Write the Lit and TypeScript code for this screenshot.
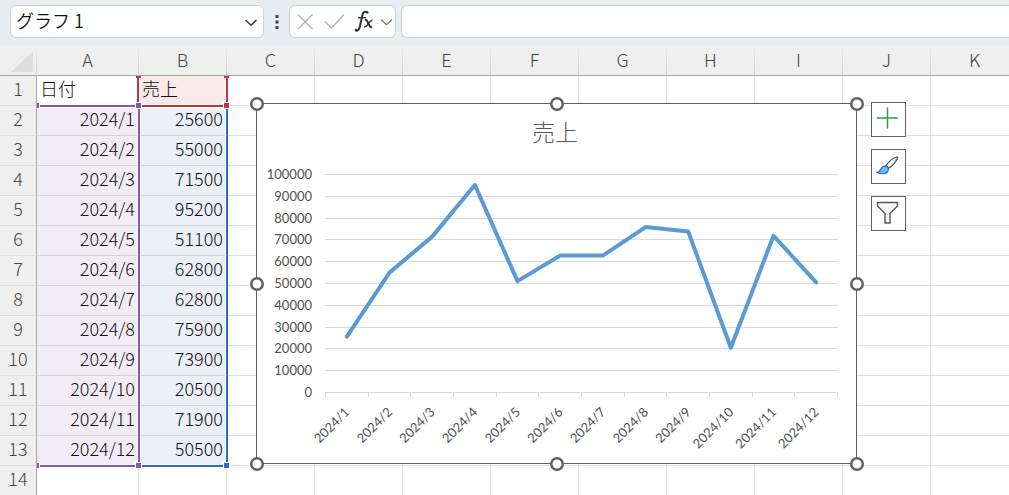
import { LitElement, html, svg, css } from "lit";
import { customElement } from "lit/decorators.js";

interface Sale {
  month: string;
  amount: number;
}

const SALES: Sale[] = [
  { month: "2024/1", amount: 25600 },
  { month: "2024/2", amount: 55000 },
  { month: "2024/3", amount: 71500 },
  { month: "2024/4", amount: 95200 },
  { month: "2024/5", amount: 51100 },
  { month: "2024/6", amount: 62800 },
  { month: "2024/7", amount: 62800 },
  { month: "2024/8", amount: 75900 },
  { month: "2024/9", amount: 73900 },
  { month: "2024/10", amount: 20500 },
  { month: "2024/11", amount: 71900 },
  { month: "2024/12", amount: 50500 },
];

const COLUMNS = ["A", "B", "C", "D", "E", "F", "G", "H", "I", "J", "K"];
const ROW_COUNT = 14;

@customElement("formula-bar")
class FormulaBar extends LitElement {
  static styles = css`
    :host {
      display: flex;
      align-items: center;
      box-sizing: border-box;
      height: 46px;
      padding: 5px 0 8px 10px;
      background: #e7edf1;
    }
    .box {
      display: flex;
      align-items: center;
      box-sizing: border-box;
      height: 33px;
      background: #fff;
      border: 1px solid #cfd1d3;
      border-radius: 6px;
    }
    .name {
      width: 254px;
      padding: 0 4px 0 5px;
    }
    .tools {
      width: 107px;
      margin-right: 5px;
      padding: 0 1px 0 5px;
    }
    .formula {
      flex: 1;
      border-right: 0;
      border-radius: 6px 0 0 6px;
    }
    input {
      flex: 1;
      min-width: 0;
      box-sizing: border-box;
      height: 30px;
      padding: 0 0 4px;
      border: 0;
      outline: 0;
      background: none;
      color: #111;
      font: 350 18px/26px "Noto Sans CJK JP", sans-serif;
    }
    .formula input {
      padding: 0 8px 4px;
    }
    button {
      display: flex;
      padding: 0;
      border: 0;
      background: none;
    }
    .grip {
      width: 25px;
      justify-content: center;
    }
    svg {
      display: block;
      fill: none;
    }
  `;

  render() {
    return html`
      <div class="box name">
        <input aria-label="名前ボックス" .value=${"グラフ 1"} />
        <button aria-label="名前の一覧">
          <svg width="16" height="16" viewBox="0 0 16 16">
            <path d="M2.5 6 L8 11.2 L13.5 6" stroke="#3b3b3b" stroke-width="1.5" />
          </svg>
        </button>
      </div>
      <button class="grip" aria-label="サイズ変更">
        <svg width="4" height="16" viewBox="0 0 4 16">
          <path d="M.5 1h3v3h-3zM.5 6.500h3v3h-3zM.5 12h3v3h-3z" fill="#444" />
        </svg>
      </button>
      <div class="box tools">
        <button aria-label="キャンセル">
          <svg width="22" height="24" viewBox="0 0 22 24">
            <path d="M3 4.500 L17.500 19 M17.500 4.500 L3 19" stroke="#b3b3b3" stroke-width="1.4" />
          </svg>
        </button>
        <button aria-label="入力">
          <svg width="34" height="24" viewBox="0 0 34 24">
            <path d="M8 11.500 L14.500 18 L27 4.500" stroke="#b3b3b3" stroke-width="1.4" />
          </svg>
        </button>
        <button aria-label="関数の挿入">
          <svg width="26" height="28" viewBox="0 0 26 28">
            <path
              d="M4.500 22.300 C7 23.500 8.300 21.500 9 18 L11.300 7.500 C12 4.300 13.500 3 16.300 4"
              stroke="#333" stroke-width="2" />
            <path d="M7 9.700 H15" stroke="#333" stroke-width="1.400" />
            <circle cx="5" cy="22" r="1.300" fill="#333" />
            <circle cx="16.300" cy="4.400" r="1.200" fill="#333" />
            <path d="M14 12.300 C17.500 10.500 17.500 20.500 21 19" stroke="#333" stroke-width="2" />
            <path d="M21.500 12.300 C18.500 11.500 16.500 20 13 19" stroke="#333" stroke-width="1.300" />
          </svg>
        </button>
        <button aria-label="関数の一覧">
          <svg width="16" height="16" viewBox="0 0 16 16">
            <path d="M4 5.500 L9.500 10.700 L15 5.500" stroke="#777" stroke-width="1.300" />
          </svg>
        </button>
      </div>
      <div class="box formula"><input aria-label="数式バー" /></div>
    `;
  }
}

@customElement("sales-chart")
class SalesChart extends LitElement {
  static styles = css`
    :host {
      display: block;
    }
    svg {
      display: block;
      overflow: visible;
    }
    .frame {
      fill: #fff;
      stroke: #616161;
    }
    .grid {
      stroke: #d9d9d9;
      shape-rendering: crispEdges;
    }
    .series {
      fill: none;
      stroke: #5b9bd5;
      stroke-width: 4;
      stroke-linejoin: round;
      stroke-linecap: round;
    }
    .title {
      font: 300 23px "Noto Sans CJK JP", sans-serif;
      fill: #595959;
      text-anchor: middle;
    }
    .axis {
      font: 13px Lato, sans-serif;
      fill: #505050;
      text-anchor: end;
    }
    .handle {
      fill: #fff;
      stroke: #616161;
      stroke-width: 2.5;
    }
  `;

  render() {
    const width = 600;
    const height = 360;
    const left = 69;
    const right = 581;
    const top = 71;
    const bottom = 289;
    const max = 100000;
    const step = (right - left) / SALES.length;
    const y = (v: number) => bottom - (v / max) * (bottom - top);
    const center = (i: number) => left + step * (i + 0.5);
    const values = Array.from({ length: 11 }, (_, i) => i * 10000);
    const points = SALES.map((s, i) => `${center(i) + 0.5},${y(s.amount) + 0.5}`).join(" ");
    const handles = [0, 1, 2].flatMap((c) =>
      [0, 1, 2].filter((r) => c !== 1 || r !== 1).map((r) => [(c * width) / 2, (r * height) / 2])
    );

    return html`
      <svg width="601" height="361" viewBox="0 0 601 361" role="img" aria-label="売上">
        <rect class="frame" x=".5" y=".5" width="600" height="360" />
        <text class="title" x="299" y="38">売上</text>
        ${values.map(
          (v) => svg`
            <line class="grid" x1=${left} x2=${right + 1} y1=${Math.round(y(v)) + 0.5} y2=${Math.round(y(v)) + 0.5} />
            <text class="axis" x="56" y=${Math.round(y(v)) + 5}>${v}</text>`
        )}
        ${Array.from({ length: SALES.length + 1 }, (_, i) => Math.round(left + step * i) + 0.5).map(
          (x) => svg`<line class="grid" x1=${x} x2=${x} y1=${bottom} y2=${bottom + 5} />`
        )}
        ${SALES.map(
          (s, i) => svg`
            <text class="axis" transform="translate(${center(i) + 4} 310) rotate(-45)">${s.month}</text>`
        )}
        <polyline class="series" points=${points} />
        ${handles.map(([cx, cy]) => svg`<circle class="handle" cx=${cx + 1} cy=${cy + 1} r="5.75" />`)}
      </svg>
    `;
  }
}

@customElement("sheet-grid")
class SheetGrid extends LitElement {
  static styles = css`
    :host {
      display: block;
      position: relative;
      overflow: hidden;
      background: #fff;
    }
    table {
      width: 100%;
      min-width: 1019px;
      table-layout: fixed;
      border-collapse: separate;
      border-spacing: 0;
      font: 300 18px/25px "Noto Sans CJK JP", sans-serif;
      color: #111;
    }
    .col-head {
      width: 37px;
    }
    .col-a {
      width: 102px;
    }
    .col-std {
      width: 88px;
    }
    th,
    td {
      box-sizing: border-box;
      height: 30px;
      padding: 0 3px 4px;
      border-right: 1px solid #e0e0e0;
      border-bottom: 1px solid #e0e0e0;
      font-weight: 300;
      text-align: left;
      white-space: nowrap;
    }
    th {
      padding: 0 0 4px;
      background: #efefef;
      color: #444;
      text-align: center;
    }
    thead th {
      border-right: 1px solid;
      border-image: linear-gradient(#efefef, #c8c8c8) 1;
      border-image-width: 0 1px 0 0;
      box-shadow: inset 0 -1px #a6a6a6;
      border-bottom: 0;
    }
    tbody th {
      border-right-color: #a6a6a6;
      border-bottom-color: #dcdcdc;
    }
    .corner {
      padding: 1px 0 0;
    }
    .corner svg {
      display: block;
      margin-left: 11px;
    }
    .num {
      text-align: right;
    }
    .months {
      background: #f1edf7;
      border-bottom-color: #d6d2dc;
    }
    .amounts {
      background: #eaeff8;
      border-bottom-color: #cfd5de;
    }
    .series-name {
      background: #f9e9e9;
    }
    .ranges {
      position: absolute;
      left: 37px;
      top: 30px;
      pointer-events: none;
    }
    .chart {
      position: absolute;
      left: 256px;
      top: 57px;
    }
    .actions {
      position: absolute;
      left: 871px;
      top: 56px;
      display: grid;
      gap: 12px;
    }
    .actions button {
      display: grid;
      place-items: center;
      width: 35px;
      height: 35px;
      padding: 0 2px 2px 0;
      border: 1px solid #616161;
      background: #fff;
    }
  `;

  private cells(row: number) {
    const sale = SALES[row - 2];
    const blanks = COLUMNS.slice(2).map(() => html`<td></td>`);
    if (row === 1) return html`<td>日付</td><td class="series-name">売上</td>${blanks}`;
    if (!sale) return html`<td></td><td></td>${blanks}`;
    return html`<td class="num months">${sale.month}</td><td class="num amounts">${sale.amount}</td>${blanks}`;
  }

  render() {
    const rows = Array.from({ length: ROW_COUNT }, (_, i) => i + 1);
    return html`
      <table>
        <colgroup>
          <col class="col-head" />
          <col class="col-a" />
          ${COLUMNS.slice(1).map(() => html`<col class="col-std" />`)}
        </colgroup>
        <thead>
          <tr>
            <th class="corner">
              <svg width="22" height="21" viewBox="0 0 22 21"><path d="M22 0V21H0z" fill="#dcdcdc" /></svg>
            </th>
            ${COLUMNS.map((c) => html`<th scope="col">${c}</th>`)}
          </tr>
        </thead>
        <tbody>
          ${rows.map((r) => html`<tr><th scope="row">${r}</th>${this.cells(r)}</tr>`)}
        </tbody>
      </table>

      <svg class="ranges" width="193" height="394" viewBox="0 0 193 394" fill="none" shape-rendering="crispEdges">
        <path d="M0 28.500H101M0 31.500H101M100.500 32V386M103.500 32V386M0 388.500H98M0 391.500H98M105 388.500H186" stroke="#fff" />
        <path d="M102.500 0V26M188.500 0V26M188.500 33V386M105 28.500H186M105 31.500H186" stroke="#fff" />
        <path d="M0 30H101M102 29V389M0 390H102" stroke="#8259b8" stroke-width="2" />
        <path d="M102 390H190M190 32V390" stroke="#2f6ac6" stroke-width="2" />
        <path d="M101 1V29M190 1V29M101 30H190M99 1H104M187 1H192" stroke="#c2333d" stroke-width="2" />
        <path d="M98 26h7v7h-7zM186 26h7v7h-7zM98 386h7v7h-7zM186 386h7v7h-7zM0 26h3v7h-3zM0 386h3v7h-3z" fill="#fff" />
        <path d="M99 27h5v5h-5zM99 387h5v5h-5zM0 27h2v5h-2zM0 387h2v5h-2z" fill="#8259b8" />
        <path d="M187 27h5v5h-5z" fill="#c2333d" />
        <path d="M187 387h5v5h-5z" fill="#2f6ac6" />
      </svg>

      <sales-chart class="chart"></sales-chart>

      <div class="actions">
        <button aria-label="グラフ要素">
          <svg width="23" height="23" viewBox="0 0 23 23">
            <path d="M1 11H22M11.500 .500V21.500" stroke="#2f9e4f" stroke-width="1.500" />
          </svg>
        </button>
        <button aria-label="グラフ スタイル">
          <svg width="23" height="23" viewBox="0 0 23 23">
            <path d="M10 11.500 C13 7.500 17 4 20.500 3 Q22 3 21.300 4.700 C20 8 16.500 11.500 12.800 14.200z"
              fill="#fff" stroke="#555" stroke-width="1.300" />
            <path d="M1 18.300 C4 18 4.500 16.500 5.500 14 C7 11.500 11 11.500 12.300 14 C13 17 10.500 19.700 7 19.700 C4.500 19.800 2.500 19.300 1 18.300z"
              fill="#7fb8e8" stroke="#1f74c4" stroke-width="1.300" />
          </svg>
        </button>
        <button aria-label="グラフ フィルター">
          <svg width="23" height="23" viewBox="0 0 23 23">
            <path d="M1.500 1.500H21.500V5L14 12.500V22H9V12.500L1.500 5z" fill="#f7f7f7" stroke="#555" stroke-width="1.400" />
          </svg>
        </button>
      </div>
    `;
  }
}

@customElement("app-root")
class AppRoot extends LitElement {
  static styles = css`
    :host {
      display: flex;
      flex-direction: column;
      overflow: hidden;
    }
  `;

  render() {
    return html`<formula-bar></formula-bar><sheet-grid></sheet-grid>`;
  }
}
